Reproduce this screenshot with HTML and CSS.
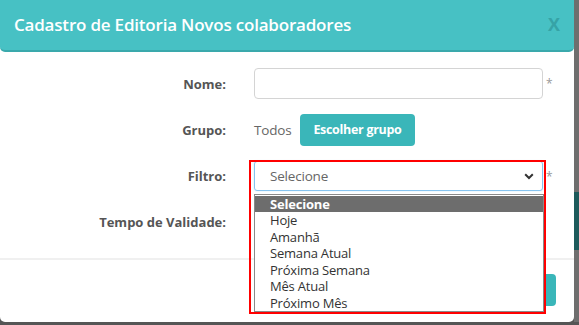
FILE: index.html
```html
<!DOCTYPE html>
<html lang="pt-BR">
<head>
    <meta charset="UTF-8">
    <meta name="viewport" content="width=device-width, initial-scale=1.0">
    <title>Cadastro de Editoria</title>
    <link rel="stylesheet" href="styles.css">
</head>
<body>
    <div class="page">
        <div class="backdrop-strip"><span class="strip-teal"></span></div>
        <div class="modal">
            <div class="modal-header">
                <span class="modal-title">Cadastro de Editoria Novos colaboradores</span>
                <span class="modal-close">X</span>
            </div>
            <div class="modal-body">
                <div class="form-row">
                    <label class="form-label">Nome:</label>
                    <div class="form-field">
                        <input type="text" class="input">
                        <span class="required">*</span>
                    </div>
                </div>
                <div class="form-row">
                    <label class="form-label">Grupo:</label>
                    <div class="form-field">
                        <span class="group-value">Todos</span>
                        <button class="button">Escolher grupo</button>
                    </div>
                </div>
                <div class="form-row">
                    <label class="form-label">Filtro:</label>
                    <div class="form-field select-wrap">
                        <div class="select">
                            <span>Selecione</span>
                            <svg class="chevron" width="10" height="7" viewBox="0 0 10 7">
                                <path d="M1.2 1.3 L5 5 L8.8 1.3" fill="none" stroke="#333" stroke-width="2"/>
                            </svg>
                        </div>
                        <span class="required">*</span>
                        <ul class="dropdown">
                            <li class="selected">Selecione</li>
                            <li>Hoje</li>
                            <li>Amanhã</li>
                            <li>Semana Atual</li>
                            <li>Próxima Semana</li>
                            <li>Mês Atual</li>
                            <li>Próximo Mês</li>
                        </ul>
                        <div class="highlight"></div>
                    </div>
                </div>
                <div class="form-row">
                    <label class="form-label">Tempo de Validade:</label>
                    <div class="form-field"></div>
                </div>
            </div>
            <div class="modal-footer">
                <button class="button footer-button">Salvar</button>
            </div>
        </div>
    </div>
</body>
</html>
```

FILE: styles.css
```css
* {
    box-sizing: border-box;
}
body {
    margin: 0;
    font-family: "Open Sans", "Noto Sans", sans-serif;
    background: #4a4a4a;
    width: 579px;
    height: 325px;
    overflow: hidden;
}
.page {
    position: relative;
    width: 579px;
    height: 325px;
    background: #555;
}
.backdrop-strip {
    position: absolute;
    left: 574px;
    top: 0;
    width: 5px;
    height: 322px;
    background: #6e6e6e;
}
.strip-teal {
    position: absolute;
    left: 0;
    top: 192px;
    width: 5px;
    height: 58px;
    background: #1d5a5b;
}
.modal {
    width: 574px;
    height: 322px;
    background: #fff;
    border-radius: 0 0 5px 5px;
    display: flex;
    flex-direction: column;
}
.modal-header {
    height: 52px;
    background: #47c1c4;
    border-bottom: 2px solid #3aa9ac;
    border-radius: 0 0 5px 5px;
    display: flex;
    align-items: center;
    justify-content: space-between;
    padding: 0 14px 2px 14px;
}
.modal-title {
    color: #fff;
    font-size: 17px;
    font-weight: 600;
    letter-spacing: -0.2px;
}
.modal-close {
    color: #36a3a6;
    font-size: 18px;
    font-weight: 700;
}
.modal-body {
    height: 208px;
    padding-top: 16px;
    border-bottom: 2px solid #f0f0f0;
}
.form-row {
    display: flex;
    align-items: center;
    height: 31px;
    margin-bottom: 15px;
}
.form-label {
    width: 226px;
    text-align: right;
    font-size: 13px;
    font-weight: 700;
    color: #555;
}
.form-field {
    margin-left: 28px;
    display: flex;
    align-items: center;
    position: relative;
}
.input {
    width: 289px;
    height: 31px;
    border: 1px solid #d4d4d4;
    border-radius: 4px;
}
.required {
    color: #999;
    font-size: 12px;
    margin-left: 3px;
    align-self: flex-start;
    margin-top: 7px;
}
.group-value {
    font-size: 13.5px;
    color: #666;
    margin-right: 9px;
    letter-spacing: -0.2px;
}
.button {
    background: #3ab6b9;
    color: #fff;
    border: 0;
    border-radius: 4px;
    font-family: inherit;
    font-weight: 700;
    font-size: 12.5px;
    letter-spacing: -0.3px;
    height: 32px;
    padding: 0 13px;
}
.select {
    width: 289px;
    height: 30px;
    border: 1px solid #86c3ee;
    border-radius: 3px;
    display: flex;
    align-items: center;
    justify-content: space-between;
    padding: 0 8px 0 15px;
    font-size: 13.5px;
    letter-spacing: -0.2px;
    color: #666;
    box-shadow: 0 0 2px rgba(120, 190, 240, 0.4);
}
.chevron {
    margin-top: 1px;
}
.dropdown {
    position: absolute;
    left: 0;
    top: 33px;
    width: 290px;
    margin: 0;
    padding: 1px 0 0 0;
    list-style: none;
    background: #fff;
    border: 1px solid #8a8a8a;
    z-index: 2;
}
.dropdown li {
    font-size: 13px;
    letter-spacing: -0.2px;
    color: #333;
    height: 16.5px;
    line-height: 16.5px;
    padding-left: 15px;
}
.dropdown li.selected {
    background: #6d6d6d;
    color: #fff;
    font-weight: 700;
}
.highlight {
    position: absolute;
    left: -5px;
    top: -1px;
    width: 297px;
    height: 154px;
    border: 2px solid #f00;
    z-index: 3;
}
.modal-footer {
    flex: 1;
    display: flex;
    justify-content: flex-end;
    align-items: flex-start;
    padding: 14px 18px 0 0;
}
.footer-button {
    width: 70px;
    height: 32px;
}
```
